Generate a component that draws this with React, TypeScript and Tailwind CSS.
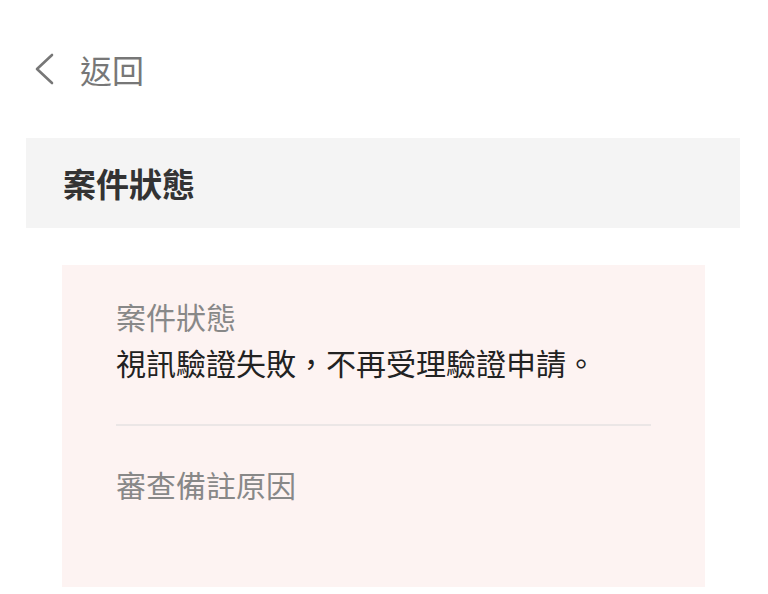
export default function App() {
  return (
    <div
      className="w-[768px] h-[594px] overflow-hidden bg-white"
      style={{ fontFamily: '"Noto Sans CJK TC", "Noto Sans", sans-serif' }}
    >
      {/* back */}
      <div className="flex items-center h-[72px] mt-[33px] pl-[32px]">
        <svg width="24" height="34" viewBox="0 0 24 34" fill="none" className="text-[#777]">
          <path d="M20 3 L5 17 L20 31" stroke="currentColor" strokeWidth="2.6" strokeLinecap="round" strokeLinejoin="round" />
        </svg>
        <span className="ml-[24px] text-[32px] leading-[40px] text-[#777]">返回</span>
      </div>

      {/* section header */}
      <div className="ml-[26px] w-[714px] mt-[33px] h-[90px] bg-[#f4f4f4] flex items-center pl-[37px]">
        <span className="text-[33px] font-bold leading-[40px] text-[#333]">案件狀態</span>
      </div>

      {/* status card */}
      <div className="ml-[62px] w-[643px] mt-[37px] h-[322px] bg-[#fdf3f2] px-[54px] pt-[33px]">
        <div className="text-[30px] leading-[36px] text-[#888]">案件狀態</div>
        <div className="mt-[8px] text-[30px] leading-[40px] text-[#222]">視訊驗證失敗，不再受理驗證申請。</div>
        <div className="mt-[42px] h-[2px] bg-[#ebe6e6]" />
        <div className="mt-[40px] text-[30px] leading-[36px] text-[#888]">審查備註原因</div>
      </div>
    </div>
  );
}
